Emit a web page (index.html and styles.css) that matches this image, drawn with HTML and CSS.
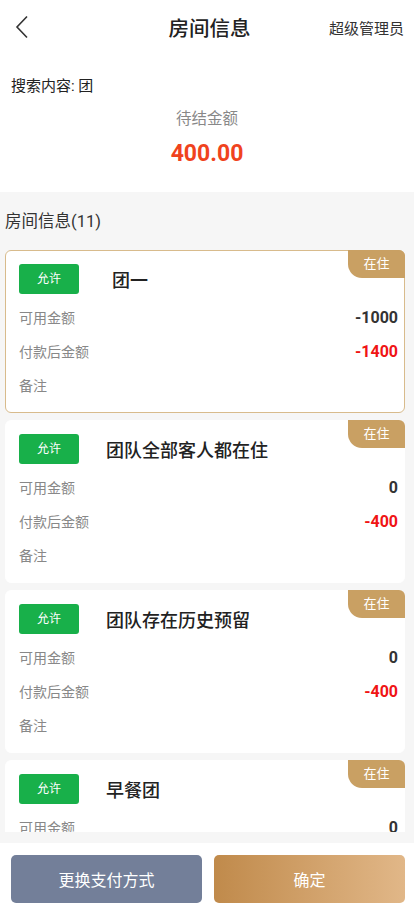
FILE: index.html
```html
<!DOCTYPE HTML>
<html>
    <head>
        <meta charset="utf-8">
        <title>房间信息</title>
        <link rel="stylesheet" href="styles.css">
    </head>
    <body>
        <div class="page">
            <div class="top">
                <div class="header">
                    <span class="back">
                        <svg width="14" height="24" viewBox="0 0 14 24"><path d="M12 1.5 L2 12 L12 22.5" fill="none" stroke="#333" stroke-width="1.6"/></svg>
                    </span>
                    <span class="title">房间信息</span>
                    <span class="user">超级管理员</span>
                </div>
                <div class="search">搜索内容: 团</div>
                <div class="sum-label">待结金额</div>
                <div class="sum-value">400.00</div>
            </div>

            <div class="list-title">房间信息(11)</div>
            <div class="list">
                <div class="card selected">
                    <span class="tag">在住</span>
                    <div class="card-head">
                        <span class="badge">允许</span>
                        <span class="name">团一</span>
                    </div>
                    <div class="row"><span class="label">可用金额</span><span class="val">-1000</span></div>
                    <div class="row"><span class="label">付款后金额</span><span class="val red">-1400</span></div>
                    <div class="row"><span class="label">备注</span></div>
                </div>
                <div class="card">
                    <span class="tag">在住</span>
                    <div class="card-head">
                        <span class="badge">允许</span>
                        <span class="name">团队全部客人都在住</span>
                    </div>
                    <div class="row"><span class="label">可用金额</span><span class="val">0</span></div>
                    <div class="row"><span class="label">付款后金额</span><span class="val red">-400</span></div>
                    <div class="row"><span class="label">备注</span></div>
                </div>
                <div class="card">
                    <span class="tag">在住</span>
                    <div class="card-head">
                        <span class="badge">允许</span>
                        <span class="name">团队存在历史预留</span>
                    </div>
                    <div class="row"><span class="label">可用金额</span><span class="val">0</span></div>
                    <div class="row"><span class="label">付款后金额</span><span class="val red">-400</span></div>
                    <div class="row"><span class="label">备注</span></div>
                </div>
                <div class="card">
                    <span class="tag">在住</span>
                    <div class="card-head">
                        <span class="badge">允许</span>
                        <span class="name">早餐团</span>
                    </div>
                    <div class="row"><span class="label">可用金额</span><span class="val">0</span></div>
                    <div class="row"><span class="label">付款后金额</span><span class="val red">-400</span></div>
                    <div class="row"><span class="label">备注</span></div>
                </div>
            </div>

            <div class="footer">
                <button type="button" class="btn gray">更换支付方式</button>
                <button type="button" class="btn gold">确定</button>
            </div>
        </div>
    </body>
</html>
```

FILE: styles.css
```css
* {
    box-sizing: border-box;
}
body {
    margin: 0;
    font-family: Roboto, "Noto Sans CJK SC", sans-serif;
    color: #333;
    background-color: #f6f6f6;
}
.page {
    display: flex;
    flex-direction: column;
    height: 909px;
    overflow: hidden;
}
.top {
    flex: none;
    background-color: #fff;
    height: 192px;
}
.header {
    display: flex;
    align-items: center;
    justify-content: space-between;
    height: 54px;
    padding: 0 10px 0 15px;
}
.back {
    display: flex;
    width: 80px;
}
.title {
    font-size: 20.5px;
    font-weight: 500;
    color: #222;
}
.user {
    width: 80px;
    text-align: right;
    font-size: 15px;
    color: #333;
}
.search {
    font-size: 15px;
    color: #222;
    padding: 21px 11px 0;
    line-height: 22px;
}
.sum-label {
    text-align: center;
    font-size: 15.5px;
    color: #888;
    line-height: 22px;
    margin-top: 11px;
}
.sum-value {
    text-align: center;
    font-size: 23px;
    font-weight: bold;
    color: #f0431d;
    line-height: 28px;
    margin-top: 10px;
}
.list-title {
    flex: none;
    font-size: 16.5px;
    color: #333;
    line-height: 22px;
    padding: 19px 5px 0;
}
.list {
    flex: 1;
    overflow: hidden;
    display: flex;
    flex-direction: column;
    gap: 7px;
    padding: 17px 9px 0 5px;
}
.card {
    position: relative;
    flex: none;
    background-color: #fff;
    border: 1px solid #fff;
    border-radius: 6px;
    padding: 13px 6px 10px 13px;
}
.card.selected {
    border-color: #d8bb8c;
}
.tag {
    position: absolute;
    top: -1px;
    right: -1px;
    width: 57px;
    height: 28px;
    line-height: 28px;
    text-align: center;
    font-size: 13px;
    color: #fff;
    background-color: #c9a063;
    border-radius: 0 6px 0 14px;
}
.card-head {
    display: flex;
    align-items: center;
    height: 30px;
    margin-bottom: 6px;
}
.badge {
    width: 60px;
    height: 30px;
    line-height: 30px;
    text-align: center;
    font-size: 12px;
    color: #fff;
    background-color: #18b04a;
    border-radius: 3px;
}
.name {
    margin-left: 27px;
    font-size: 18px;
    font-weight: 500;
    color: #222;
}
.selected .name {
    margin-left: 33px;
}
.row {
    display: flex;
    justify-content: space-between;
    align-items: center;
    height: 34px;
}
.label {
    font-size: 14px;
    color: #888;
}
.val {
    font-size: 16px;
    font-weight: bold;
    color: #333;
}
.val.red {
    color: #f01414;
}
.footer {
    flex: none;
    display: flex;
    gap: 12px;
    margin-top: 11px;
    height: 66px;
    padding: 12px 9px 6px 11px;
    background-color: #fff;
}
.btn {
    flex: 1;
    height: 48px;
    border: none;
    border-radius: 5px;
    font-family: "Noto Sans CJK SC", sans-serif;
    font-size: 16px;
    color: #fff;
}
.btn.gray {
    background-color: #737f99;
}
.btn.gold {
    background: linear-gradient(to right, #c08a4b, #e1b788);
}
```
